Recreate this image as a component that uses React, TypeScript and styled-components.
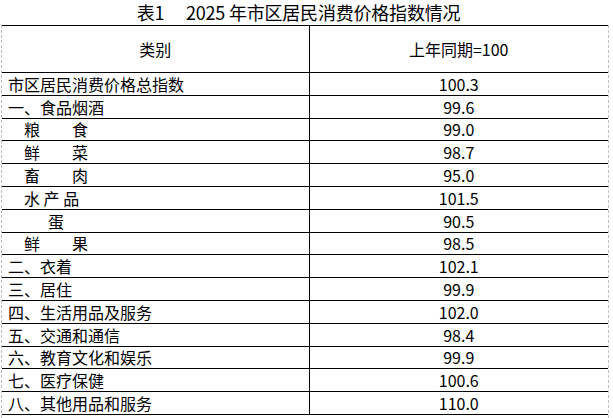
import React from "react";
import styled, { createGlobalStyle } from "styled-components";

const Global = createGlobalStyle`
  html, body { margin: 0; padding: 0; background: #fff; }
  body {
    font-family: "Noto Sans CJK SC", "Noto Sans", sans-serif;
    color: #000;
  }
`;

const Page = styled.div`
  width: 613px;
  height: 418px;
  overflow: hidden;
  display: flex;
  flex-direction: column;
`;

const Title = styled.div`
  height: 25px;
  display: flex;
  align-items: center;
  justify-content: center;
  padding-right: 16px;
  font-size: 18px;
  line-height: 25px;
  white-space: pre;
  letter-spacing: -0.2px;
`;

const Sheet = styled.div`
  margin-left: 1px;
  width: 608px;
  flex: 1;
  box-sizing: border-box;
  border-left: 1px dashed #bdbdbd;
  border-right: 1px dashed #bdbdbd;
`;

const Table = styled.table`
  width: 606px;
  border-collapse: collapse;
  table-layout: fixed;
  font-size: 16px;
`;

const HeadCell = styled.th`
  height: 46px;
  padding: 0;
  font-weight: normal;
  text-align: center;
  vertical-align: middle;
  border-top: 1px solid #000;
  border-bottom: 1px solid #000;
  border-right: ${(p: { $divider?: boolean }) => (p.$divider ? "1px solid #000" : "none")};
  line-height: 20px;
`;

const Cell = styled.td<{ $align: "left" | "center"; $divider?: boolean }>`
  height: 21.8px;
  padding: 0 0 0 ${(p) => (p.$align === "left" ? "6px" : "0")};
  text-align: ${(p) => p.$align};
  vertical-align: middle;
  white-space: pre;
  border-bottom: 1px solid #000;
  border-right: ${(p) => (p.$divider ? "1px solid #000" : "none")};
  line-height: 20px;
`;

const rows: [string, string][] = [
  ["市区居民消费价格总指数", "100.3"],
  ["一、食品烟酒", "99.6"],
  ["　粮　　食", "99.0"],
  ["　鲜　　菜", "98.7"],
  ["　畜　　肉", "95.0"],
  ["　水 产 品", "101.5"],
  ["　　\u2002蛋", "90.5"],
  ["　鲜　　果", "98.5"],
  ["二、衣着", "102.1"],
  ["三、居住", "99.9"],
  ["四、生活用品及服务", "102.0"],
  ["五、交通和通信", "98.4"],
  ["六、教育文化和娱乐", "99.9"],
  ["七、医疗保健", "100.6"],
  ["八、其他用品和服务", "110.0"],
];

export default function App() {
  return (
    <>
      <Global />
      <Page>
        <Title>{"表1　 2025 年市区居民消费价格指数情况"}</Title>
        <Sheet>
          <Table>
            <colgroup>
              <col style={{ width: 307 }} />
              <col style={{ width: 299 }} />
            </colgroup>
            <thead>
              <tr>
                <HeadCell $divider>类别</HeadCell>
                <HeadCell>上年同期=100</HeadCell>
              </tr>
            </thead>
            <tbody>
              {rows.map(([name, value]) => (
                <tr key={name}>
                  <Cell $align="left" $divider>
                    {name}
                  </Cell>
                  <Cell $align="center">{value}</Cell>
                </tr>
              ))}
            </tbody>
          </Table>
        </Sheet>
      </Page>
    </>
  );
}
